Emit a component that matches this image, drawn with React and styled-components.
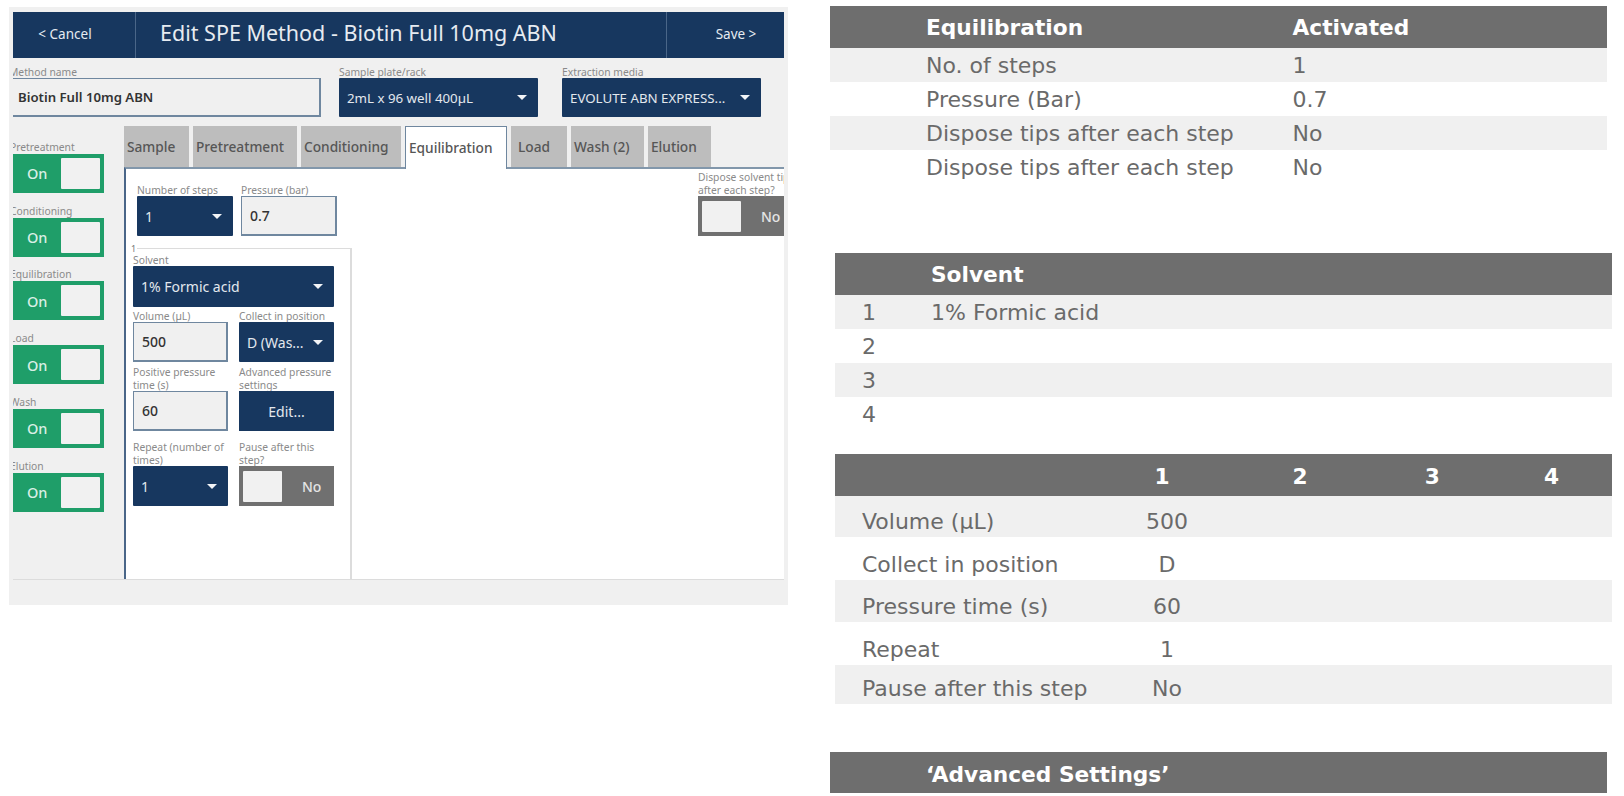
import styled, { createGlobalStyle } from 'styled-components';

const NAVY = '#17375f';
const UI_FONT = '"Noto Sans", "Open Sans", sans-serif';
const TABLE_FONT = '"DejaVu Sans", Verdana, sans-serif';

const GlobalStyle = createGlobalStyle`
  html, body {
    margin: 0;
    padding: 0;
    background: #ffffff;
  }
  * {
    box-sizing: border-box;
  }
`;

export default function App() {
  return (
    <Page>
      <GlobalStyle />
      <MethodPanel />
      <SummaryColumn />
    </Page>
  );
}

function MethodPanel() {
  const sections = ['Pretreatment', 'Conditioning', 'Equilibration', 'Load', 'Wash', 'Elution'];
  const tabs = [
    ['Sample', 65, 3],
    ['Pretreatment', 104, 3],
    ['Conditioning', 100, 3],
    ['Equilibration', 102, 3],
    ['Load', 56, 7],
    ['Wash (2)', 73, 3],
    ['Elution', 63, 3],
  ];

  return (
    <Panel>
      <Screen>
        <Header>
          <CancelButton>&lt; Cancel</CancelButton>
          <HeaderTitle>Edit SPE Method - Biotin Full 10mg ABN</HeaderTitle>
          <SaveButton>Save &gt;</SaveButton>
        </Header>

        <MethodRow>
          <Field $width={312} $labelHeight={20}>
            <FieldLabel>Method name</FieldLabel>
            <TextInput $height={39} $strong>Biotin Full 10mg ABN</TextInput>
          </Field>
          <Field $width={199} $labelHeight={20}>
            <FieldLabel>Sample plate/rack</FieldLabel>
            <Select value="2mL x 96 well 400µL" height={39} small />
          </Field>
          <ExtractionField $width={199} $labelHeight={20}>
            <FieldLabel>Extraction media</FieldLabel>
            <Select value="EVOLUTE ABN EXPRESS..." height={39} small />
          </ExtractionField>
        </MethodRow>

        <Main>
          <Sidebar>
            {sections.map((name) => (
              <SideItem key={name}>
                <SideLabel>{name}</SideLabel>
                <Toggle>
                  <ToggleText>On</ToggleText>
                  <Knob />
                </Toggle>
              </SideItem>
            ))}
          </Sidebar>

          <TabsColumn>
            <TabBar>
              {tabs.map(([name, width, indent]) => (
                <Tab key={name} $width={width} $indent={indent} $active={name === 'Equilibration'}>
                  {name}
                </Tab>
              ))}
            </TabBar>

            <TabBody>
              <TopRow>
                <TopFields>
                  <Field $width={96} $labelHeight={27}>
                    <FieldLabel>Number of steps</FieldLabel>
                    <Select value="1" height={40} />
                  </Field>
                  <Field $width={96} $labelHeight={27}>
                    <FieldLabel>Pressure (bar)</FieldLabel>
                    <TextInput $height={40}>0.7</TextInput>
                  </Field>
                </TopFields>
                <DisposeField>
                  <FieldLabel>
                    Dispose solvent tips
                    <br />
                    after each step?
                  </FieldLabel>
                  <OffToggle />
                </DisposeField>
              </TopRow>

              <StepBox>
                <StepNumber>1</StepNumber>
                <StepGrid>
                  <Field $labelHeight={17} $span>
                    <FieldLabel>Solvent</FieldLabel>
                    <Select value="1% Formic acid" height={41} />
                  </Field>
                  <Field $labelHeight={15}>
                    <FieldLabel>Volume (µL)</FieldLabel>
                    <TextInput $height={40}>500</TextInput>
                  </Field>
                  <Field $labelHeight={15}>
                    <FieldLabel>Collect in position</FieldLabel>
                    <Select value="D (Was..." height={40} />
                  </Field>
                  <Field $labelHeight={29}>
                    <FieldLabel>
                      Positive pressure
                      <br />
                      time (s)
                    </FieldLabel>
                    <TextInput $height={40}>60</TextInput>
                  </Field>
                  <Field $labelHeight={29}>
                    <FieldLabel>
                      Advanced pressure
                      <br />
                      settings
                    </FieldLabel>
                    <EditButton>Edit...</EditButton>
                  </Field>
                  <Field $labelHeight={35}>
                    <FieldLabel>
                      Repeat (number of
                      <br />
                      times)
                    </FieldLabel>
                    <Select value="1" height={40} />
                  </Field>
                  <Field $labelHeight={35}>
                    <FieldLabel>
                      Pause after this
                      <br />
                      step?
                    </FieldLabel>
                    <OffToggle />
                  </Field>
                </StepGrid>
              </StepBox>
            </TabBody>
          </TabsColumn>
        </Main>

        <Footer />
      </Screen>
    </Panel>
  );
}

function Select({ value, height, small }) {
  return (
    <SelectBox $height={height}>
      <SelectValue $small={small}>{value}</SelectValue>
      <Caret />
    </SelectBox>
  );
}

function OffToggle() {
  return (
    <OffSwitch>
      <Knob />
      <OffText>No</OffText>
    </OffSwitch>
  );
}

function SummaryColumn() {
  const equilibration = [
    ['No. of steps', '1'],
    ['Pressure (Bar)', '0.7'],
    ['Dispose tips after each step', 'No'],
    ['Dispose tips after each step', 'No'],
  ];
  const solvents = [
    ['1', '1% Formic acid'],
    ['2', ''],
    ['3', ''],
    ['4', ''],
  ];
  const steps = [
    ['Volume (µL)', '500', 41, 10],
    ['Collect in position', 'D', 43, 11],
    ['Pressure time (s)', '60', 42, 11],
    ['Repeat', '1', 43, 11],
    ['Pause after this step', 'No', 39, 7],
  ];

  return (
    <Summary>
      <Table>
        <HeadRow>
          <NameCell $width={462.5} $indent={96}>Equilibration</NameCell>
          <NameCell>Activated</NameCell>
        </HeadRow>
        {equilibration.map(([name, value], i) => (
          <Row key={i} $striped={i % 2 === 0} $top={1}>
            <NameCell $width={462.5} $indent={96}>{name}</NameCell>
            <NameCell>{value}</NameCell>
          </Row>
        ))}
      </Table>

      <Table $shifted $gap={69}>
        <HeadRow $top={1}>
          <NameCell $indent={96}>Solvent</NameCell>
        </HeadRow>
        {solvents.map(([number, name], i) => (
          <Row key={number} $striped={i % 2 === 0}>
            <NameCell $width={96} $indent={27}>{number}</NameCell>
            <NameCell>{name}</NameCell>
          </Row>
        ))}
      </Table>

      <Table $shifted $gap={23}>
        <HeadRow $top={2}>
          <NameCell $width={261.5} />
          <ValueCell $width={131}>1</ValueCell>
          <ValueCell $width={145}>2</ValueCell>
          <ValueCell $width={119.5}>3</ValueCell>
          <ValueCell $width={119}>4</ValueCell>
        </HeadRow>
        {steps.map(([name, value, height, top], i) => (
          <Row key={name} $striped={i % 2 === 0} $height={height} $top={top}>
            <NameCell $width={261.5} $indent={27}>{name}</NameCell>
            <ValueCell $width={141}>{value}</ValueCell>
          </Row>
        ))}
      </Table>

      <Table $gap={48}>
        <HeadRow $height={41} $top={3}>
          <NameCell $indent={96}>‘Advanced Settings’</NameCell>
        </HeadRow>
      </Table>
    </Summary>
  );
}

const Page = styled.div`
  display: flex;
  align-items: flex-start;
  width: 1624px;
  height: 796px;
  overflow: hidden;
  background: #ffffff;
`;

const Panel = styled.section`
  flex: none;
  width: 779px;
  height: 598px;
  margin: 7px 0 0 9px;
  padding: 5px 4px 0;
  background: #f0f0f0;
  font-family: ${UI_FONT};
`;

const Screen = styled.div`
  display: flex;
  flex-direction: column;
  height: 593px;
  overflow: hidden;
`;

const Header = styled.header`
  flex: none;
  display: flex;
  height: 46px;
  background: ${NAVY};
  color: #e6ebf1;
`;

const CancelButton = styled.div`
  flex: none;
  width: 123px;
  padding: 0 18px 2px 0;
  display: flex;
  align-items: center;
  justify-content: center;
  font-size: 13.5px;
  border-right: 1px solid #4a6688;
`;

const SaveButton = styled(CancelButton)`
  width: 118px;
  padding: 0 0 2px 21px;
  border-right: none;
  border-left: 1px solid #4a6688;
`;

const HeaderTitle = styled.h1`
  flex: 1;
  margin: 0;
  padding-left: 24px;
  font-size: 21.5px;
  font-weight: 400;
  line-height: 41px;
  white-space: nowrap;
`;

const MethodRow = styled.div`
  flex: none;
  display: flex;
  gap: 18px;
  height: 68px;
  margin-left: -4px;
`;

const Field = styled.div`
  flex: none;
  display: grid;
  grid-template-rows: ${(p) => p.$labelHeight}px auto;
  grid-template-columns: minmax(0, 1fr);
  width: ${(p) => (p.$width ? `${p.$width}px` : 'auto')};
  ${(p) => p.$span && 'grid-column: 1 / -1;'}
`;

const ExtractionField = styled(Field)`
  margin-left: 6px;
`;

const FieldLabel = styled.label`
  display: block;
  align-self: end;
  margin-bottom: -1px;
  font-size: 10.3px;
  line-height: 13px;
  color: #8a8a8a;
  white-space: nowrap;
`;

const TextInput = styled.div`
  display: flex;
  align-items: center;
  height: ${(p) => p.$height}px;
  padding-left: 8px;
  background: #f0f0f0;
  border: 1px solid #6f879f;
  border-width: 1px 2px 2px 1px;
  color: #333333;
  font-size: ${(p) => (p.$strong ? 13.2 : 14)}px;
  font-weight: ${(p) => (p.$strong ? 600 : 500)};
  white-space: nowrap;
`;

const SelectBox = styled.div`
  display: flex;
  align-items: center;
  height: ${(p) => p.$height}px;
  padding: 0 11px 0 8px;
  background: ${NAVY};
  border-radius: 1px;
  color: #e3e8ee;
`;

const SelectValue = styled.span`
  flex: 1;
  font-size: ${(p) => (p.$small ? 13.3 : 14)}px;
  white-space: nowrap;
`;

const Caret = styled.i`
  flex: none;
  width: 0;
  height: 0;
  border-left: 5px solid transparent;
  border-right: 5px solid transparent;
  border-top: 5px solid #f2f4f7;
`;

const Main = styled.div`
  flex: none;
  display: flex;
  height: 453px;
`;

const Sidebar = styled.aside`
  flex: none;
  width: 111px;
  padding-top: 3px;
`;

const SideItem = styled.div`
  display: flex;
  flex-direction: column;
  justify-content: flex-end;
  height: 63.75px;
  margin-left: -3px;
`;

const SideLabel = styled.span`
  font-size: 10.3px;
  line-height: 13px;
  color: #8a8a8a;
  white-space: nowrap;
`;

const Toggle = styled.div`
  flex: none;
  display: flex;
  align-items: center;
  justify-content: space-between;
  width: 94px;
  height: 39px;
  padding: 0 4px 0 17px;
  background: #1f9e69;
`;

const ToggleText = styled.span`
  font-size: 14.5px;
  font-weight: 500;
  color: #d9efe5;
`;

const Knob = styled.span`
  flex: none;
  width: 39px;
  height: 31px;
  background: #f1f1f1;
  border-radius: 1px;
`;

const TabsColumn = styled.div`
  flex: 1;
  display: flex;
  flex-direction: column;
  min-width: 0;
`;

const TabBar = styled.nav`
  flex: none;
  display: flex;
  align-items: flex-start;
  gap: 4px;
  height: 41px;
`;

const Tab = styled.div`
  position: relative;
  z-index: 1;
  flex: none;
  display: flex;
  align-items: center;
  width: ${(p) => p.$width}px;
  height: ${(p) => (p.$active ? 43 : 41)}px;
  padding-left: ${(p) => p.$indent}px;
  padding-bottom: ${(p) => (p.$active ? 2 : 0)}px;
  background: ${(p) => (p.$active ? '#ffffff' : '#bdbdbd')};
  border: ${(p) => (p.$active ? '1px solid #6f879f' : 'none')};
  border-bottom: none;
  color: #565656;
  font-size: 13.7px;
  font-weight: 500;
  white-space: nowrap;
`;

const TabBody = styled.div`
  flex: 1;
  padding-top: 8px;
  overflow: hidden;
  background: #ffffff;
  border-top: 2px solid #8297ab;
  border-left: 2px solid #4a6688;
`;

const TopRow = styled.div`
  display: flex;
  align-items: flex-end;
  height: 59px;
  padding-left: 11px;
`;

const TopFields = styled.div`
  display: flex;
  gap: 8px;
`;

const DisposeField = styled.div`
  flex: none;
  width: 95px;
  margin-left: auto;
  margin-right: -9px;
`;

const OffSwitch = styled.div`
  display: flex;
  align-items: center;
  gap: 20px;
  height: 40px;
  padding-left: 4px;
  background: #707070;
`;

const OffText = styled.span`
  font-size: 14px;
  font-weight: 500;
  color: #e4e4e4;
`;

const StepBox = styled.div`
  position: relative;
  width: 222px;
  height: 331px;
  margin: 12px 0 0 4px;
  padding-left: 3px;
  border-top: 1px solid #dcdcdc;
  border-right: 2px solid #dcdcdc;
`;

const StepNumber = styled.span`
  position: absolute;
  top: -6px;
  left: 0;
  padding: 0 1px;
  background: #ffffff;
  font-size: 9px;
  line-height: 11px;
  color: #777777;
`;

const StepGrid = styled.div`
  display: grid;
  grid-template-columns: 95px 95px;
  column-gap: 11px;
`;

const EditButton = styled.div`
  display: flex;
  align-items: center;
  justify-content: center;
  height: 40px;
  background: ${NAVY};
  color: #e3e8ee;
  font-size: 14px;
`;

const Footer = styled.div`
  flex: 1;
  border-top: 1px solid #dcdcdc;
`;

const Summary = styled.div`
  flex: none;
  width: 786px;
  margin: 6px 0 0 42px;
  font-family: ${TABLE_FONT};
`;

const Table = styled.div`
  width: 777px;
  margin-top: ${(p) => p.$gap || 0}px;
  margin-left: ${(p) => (p.$shifted ? 5 : 0)}px;
`;

const Row = styled.div`
  display: flex;
  align-items: center;
  height: ${(p) => p.$height || 34}px;
  padding-top: ${(p) => p.$top || 0}px;
  background: ${(p) => (p.$striped ? '#f0f0f0' : '#ffffff')};
  color: #6a6a6a;
  font-size: 22px;
  white-space: nowrap;
`;

const HeadRow = styled(Row)`
  height: ${(p) => p.$height || 42}px;
  background: #6e6e6e;
  color: #ffffff;
  font-size: 21.7px;
  font-weight: 700;
`;

const NameCell = styled.div`
  flex: ${(p) => (p.$width ? 'none' : 1)};
  width: ${(p) => (p.$width ? `${p.$width}px` : 'auto')};
  padding-left: ${(p) => p.$indent || 0}px;
`;

const ValueCell = styled.div`
  flex: none;
  width: ${(p) => p.$width}px;
  text-align: center;
`;
